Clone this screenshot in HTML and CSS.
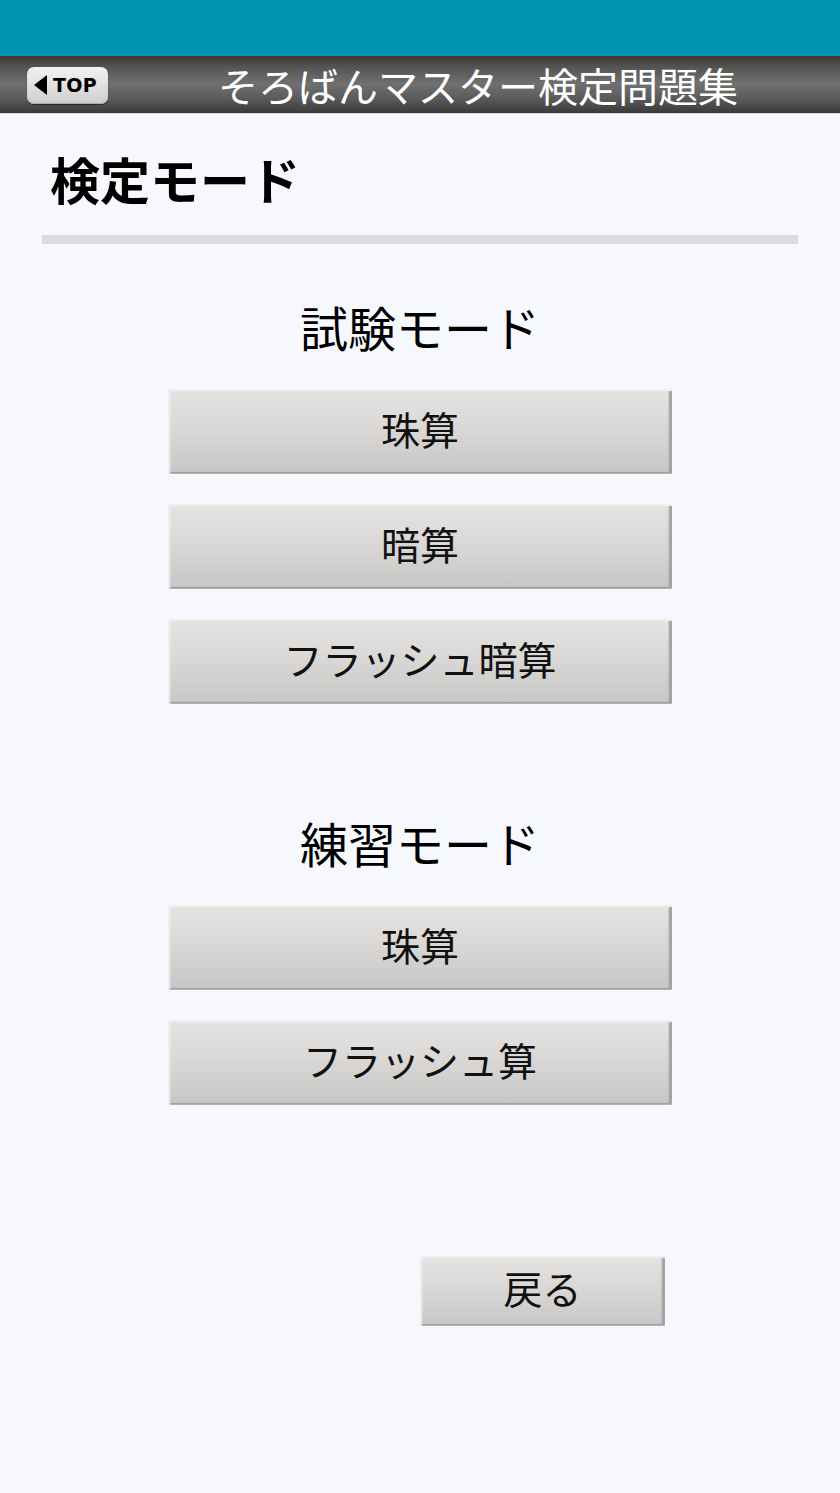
FILE: index.html
```html
<!DOCTYPE html>
<html lang="ja">
<head>
<meta charset="utf-8">
<title>検定モード</title>
<link rel="stylesheet" href="styles.css">
</head>
<body>
<div class="status"></div>
<header class="header">
  <div class="top-btn"><span class="tri"></span><span class="top-label">TOP</span></div>
  <div class="app-title">そろばんマスター検定問題集</div>
</header>
<main class="main">
  <h1 class="page-title">検定モード</h1>
  <div class="divider"></div>
  <section class="section first">
    <h2 class="section-title">試験モード</h2>
    <div class="btn-list">
      <div class="btn">珠算</div>
      <div class="btn">暗算</div>
      <div class="btn">フラッシュ暗算</div>
    </div>
  </section>
  <section class="section second">
    <h2 class="section-title">練習モード</h2>
    <div class="btn-list">
      <div class="btn">珠算</div>
      <div class="btn">フラッシュ算</div>
    </div>
  </section>
  <div class="back-row">
    <div class="btn back">戻る</div>
  </div>
</main>
</body>
</html>
```

FILE: styles.css
```css
html, body {
  margin: 0;
  padding: 0;
}
body {
  background: #f7f8fd;
  font-family: "Noto Sans CJK JP", "Noto Sans", sans-serif;
  color: #111;
  width: 840px;
  min-height: 1493px;
}
.status {
  height: 56px;
  background: #0093b0;
  border-bottom: 1px solid #4a3420;
}
.header {
  height: 56px;
  background: linear-gradient(#3c3c3c 0%, #575757 20%, #707070 48%, #5a5a5a 75%, #3a3a3a 100%);
  border-bottom: 1px solid #d8d8d8;
  display: flex;
  align-items: center;
}
.top-btn {
  margin-left: 27px;
  width: 81px;
  height: 37px;
  box-sizing: border-box;
  border-radius: 7px;
  background: linear-gradient(#f2f2f2, #dcdcdc 60%, #cfcfcf);
  box-shadow: inset 0 -1px 1px #a8a8a8, 0 1px 1px #2a2a2a;
  display: flex;
  align-items: center;
  padding-left: 7px;
  gap: 6px;
}
.tri {
  width: 0;
  height: 0;
  border-top: 10px solid transparent;
  border-bottom: 10px solid transparent;
  border-right: 13px solid #000;
}
.top-label {
  font-family: "DejaVu Sans", "Liberation Sans", sans-serif;
  font-weight: 700;
  font-size: 19px;
  color: #000;
  letter-spacing: 0.3px;
}
.app-title {
  margin-left: 110px;
  color: #fff;
  font-size: 40px;
  line-height: 40px;
  white-space: nowrap;
}
.main {
  padding: 0;
}
.page-title {
  margin: 39px 0 0 50px;
  font-size: 50px;
  line-height: 50px;
  font-weight: 700;
  color: #000;
}
.divider {
  margin: 32px 42px 0 42px;
  height: 9px;
  background: #dcdcdc;
}
.section.first {
  margin-top: 58px;
}
.section.second {
  margin-top: 114px;
}
.section-title {
  margin: 0;
  text-align: center;
  font-size: 48px;
  line-height: 48px;
  font-weight: 400;
  color: #000;
}
.btn-list {
  margin-top: 39px;
  display: flex;
  flex-direction: column;
  align-items: center;
  gap: 30px;
}
.btn {
  width: 504px;
  height: 85px;
  box-sizing: border-box;
  padding-bottom: 7px;
  display: flex;
  align-items: center;
  justify-content: center;
  font-size: 39px;
  color: #111;
  background: linear-gradient(#e6e4e2 0%, #dcdad8 40%, #c6c6c6 100%);
  box-shadow:
    inset 0 2px 1px #f1f0ee,
    inset 2px 0 2px #f2f2f2,
    inset -3px 0 2px #9d9d9d,
    inset 0 -2px 1px #9a9a9a;
}
.back-row {
  margin-top: 151px;
  padding-left: 420px;
}
.btn.back {
  width: 245px;
  height: 70px;
  padding-bottom: 9px;
}
```
